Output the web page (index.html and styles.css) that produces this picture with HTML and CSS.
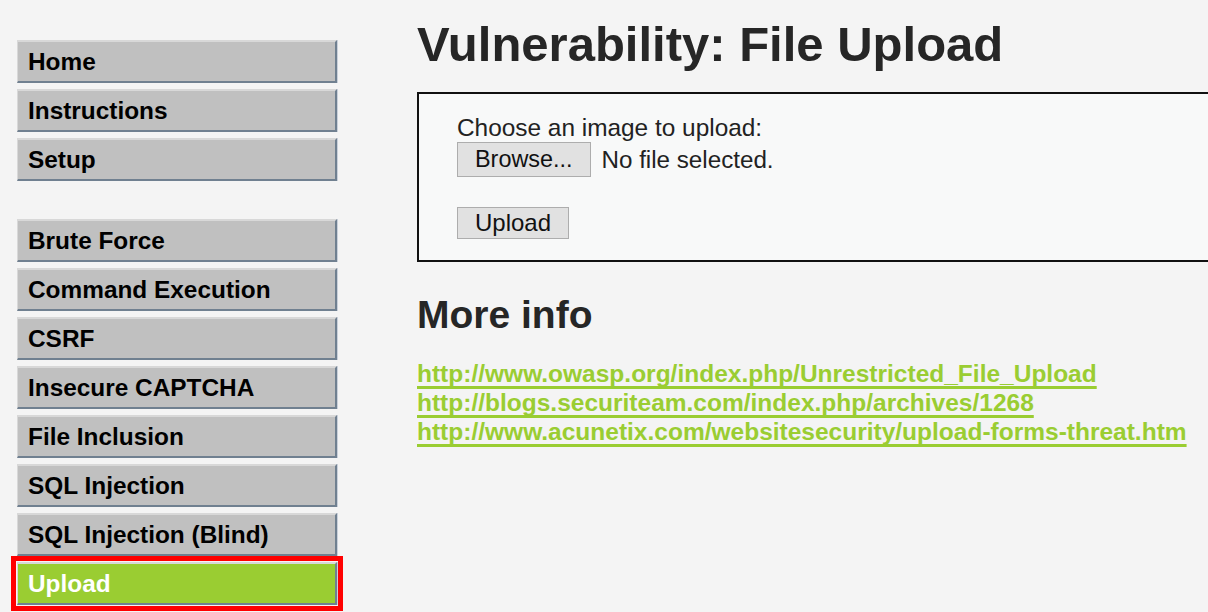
FILE: index.html
```html
<!DOCTYPE html>
<html>
<head>
<meta charset="utf-8">
<title>DVWA - File Upload</title>
<link rel="stylesheet" href="styles.css">
</head>
<body>
<div class="page">
  <nav class="sidebar">
    <ul class="menu">
      <li><a href="#">Home</a></li>
      <li><a href="#">Instructions</a></li>
      <li><a href="#">Setup</a></li>
    </ul>
    <ul class="menu menu-gap">
      <li><a href="#">Brute Force</a></li>
      <li><a href="#">Command Execution</a></li>
      <li><a href="#">CSRF</a></li>
      <li><a href="#">Insecure CAPTCHA</a></li>
      <li><a href="#">File Inclusion</a></li>
      <li><a href="#">SQL Injection</a></li>
      <li><a href="#">SQL Injection (Blind)</a></li>
      <li class="selected"><a href="#">Upload</a></li>
    </ul>
  </nav>
  <main class="main">
    <h1 class="title">Vulnerability: File Upload</h1>
    <div class="vulnerable">
      <form class="upload-form">
        <div class="label">Choose an image to upload:</div>
        <div class="file-row">
          <button type="button" class="btn btn-browse">Browse...</button>
          <span class="file-name">No file selected.</span>
        </div>
        <div class="submit-row">
          <button type="button" class="btn btn-upload">Upload</button>
        </div>
      </form>
    </div>
    <h2 class="more">More info</h2>
    <ul class="links">
      <li><a href="#">http://www.owasp.org/index.php/Unrestricted_File_Upload</a></li>
      <li><a href="#">http://blogs.securiteam.com/index.php/archives/1268</a></li>
      <li><a href="#">http://www.acunetix.com/websitesecurity/upload-forms-threat.htm</a></li>
    </ul>
  </main>
</div>
</body>
</html>
```

FILE: styles.css
```css
html, body {
  margin: 0;
  padding: 0;
  overflow: hidden;
  height: 612px;
}

body {
  background: #f4f4f4;
  font-family: "Liberation Sans", Arial, sans-serif;
  color: #222;
}

.page {
  display: flex;
  align-items: flex-start;
}

.sidebar {
  padding: 40px 0 0 17px;
  width: 320px;
  flex: none;
}

.menu {
  list-style: none;
  margin: 0;
  padding: 0;
  display: flex;
  flex-direction: column;
  gap: 6px;
}

.menu-gap {
  margin-top: 38px;
}

.menu a {
  display: block;
  height: 28px;
  padding: 6px 0 5px 10px;
  line-height: 28px;
  font-size: 24.4px;
  font-weight: bold;
  color: #000;
  text-decoration: none;
  background: #c0c0c0;
  border-top: 2px solid #d8d8d8;
  border-left: 1px solid #d8d8d8;
  border-right: 2px solid #708090;
  border-bottom: 2px solid #708090;
  box-shadow: 1px 0 0 #c9d0da;
}

.menu .selected a {
  background: #9acd32;
  color: #fff;
  outline: 5px solid #ff0000;
  outline-offset: 1px;
}

.main {
  margin-left: 80px;
  padding-top: 16px;
  flex: none;
  width: 900px;
}

.title {
  margin: 0;
  font-size: 49px;
  line-height: 56px;
  font-weight: bold;
  color: #262626;
}

.vulnerable {
  margin-top: 20px;
  width: 840px;
  height: 130px;
  border: 2px solid #111;
  background: #f8f9f9;
  padding: 19px 0 17px 38px;
}

.upload-form {
  margin: 0;
}

.label {
  font-size: 24.4px;
  line-height: 29px;
  color: #222;
}

.file-row {
  display: flex;
  align-items: center;
  gap: 11px;
}

.btn {
  font-family: "Liberation Sans", Arial, sans-serif;
  font-size: 24px;
  color: #111;
  background: #e1e1e1;
  border: 1px solid #adadad;
  border-radius: 0;
  padding: 0 17px;
  margin: 0;
}

.btn-browse {
  height: 35px;
  font-size: 23.4px;
}

.file-name {
  font-size: 24.2px;
  color: #222;
}

.submit-row {
  margin-top: 30px;
}

.btn-upload {
  height: 32px;
}

.more {
  margin: 31px 0 0;
  font-size: 39px;
  line-height: 44px;
  font-weight: bold;
  color: #262626;
}

.links {
  list-style: none;
  margin: 22px 0 0;
  padding: 0;
}

.links li {
  line-height: 29px;
  font-size: 24.5px;
}

.links a {
  color: #9acd32;
  font-weight: bold;
  text-decoration: underline;
  text-decoration-thickness: 2.5px;
  text-underline-offset: 4px;
  text-decoration-skip-ink: none;
}
```
